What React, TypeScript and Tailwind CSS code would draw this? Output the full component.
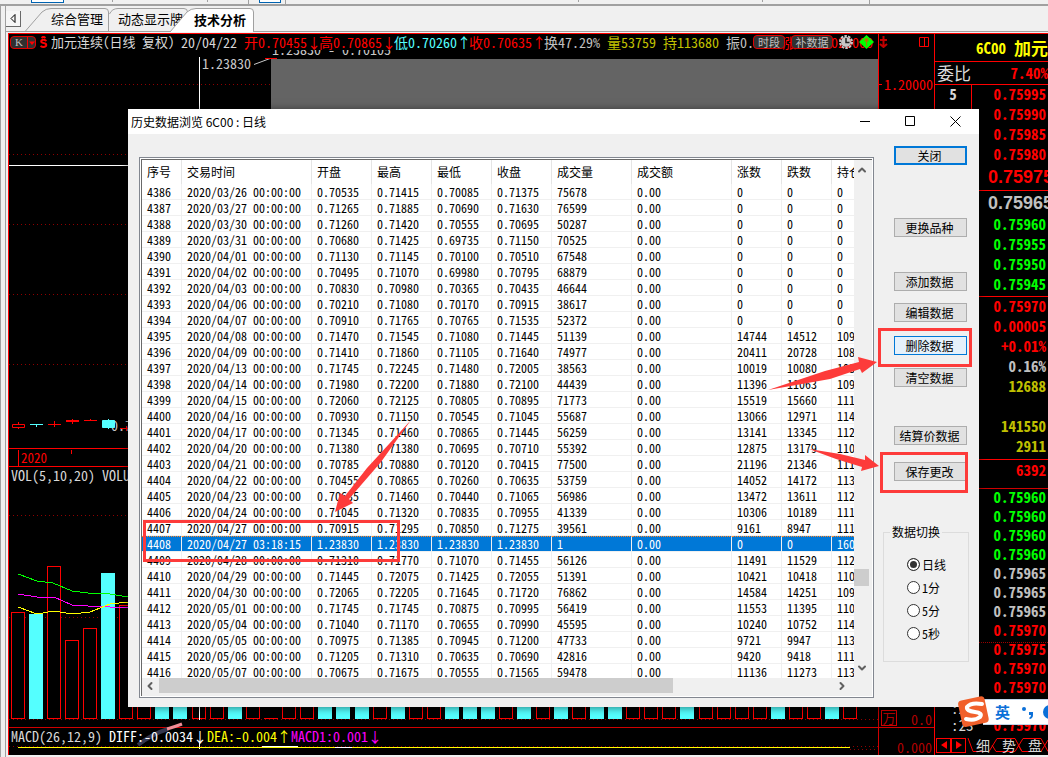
import { useState } from "react";
import { ChevronDown, ChevronLeft, ChevronRight, ChevronUp } from "lucide-react";

type Quote = { price: string; tone: string };

const columns = ["序号", "交易时间", "开盘", "最高", "最低", "收盘", "成交量", "成交额", "涨数", "跌数", "持仓"];

const SELECTED_ID = "4408";

// id, time, open, high, low, close, volume, amount, ups, downs, holding
const rows: string[][] = [
  "4386|2020/03/26 00:00:00|0.70535|0.71415|0.70085|0.71375|75678|0.00|0|0|0",
  "4387|2020/03/27 00:00:00|0.71265|0.71885|0.70690|0.71630|76599|0.00|0|0|0",
  "4388|2020/03/30 00:00:00|0.71260|0.71420|0.70555|0.70695|50287|0.00|0|0|0",
  "4389|2020/03/31 00:00:00|0.70680|0.71425|0.69735|0.71150|70525|0.00|0|0|0",
  "4390|2020/04/01 00:00:00|0.71130|0.71145|0.70100|0.70510|67548|0.00|0|0|0",
  "4391|2020/04/02 00:00:00|0.70495|0.71070|0.69980|0.70795|68879|0.00|0|0|0",
  "4392|2020/04/03 00:00:00|0.70830|0.70980|0.70365|0.70435|46644|0.00|0|0|0",
  "4393|2020/04/06 00:00:00|0.70210|0.71080|0.70170|0.70915|38617|0.00|0|0|0",
  "4394|2020/04/07 00:00:00|0.70910|0.71765|0.70765|0.71535|52372|0.00|0|0|0",
  "4395|2020/04/08 00:00:00|0.71470|0.71545|0.71080|0.71445|51139|0.00|14744|14512|109",
  "4396|2020/04/09 00:00:00|0.71410|0.71860|0.71105|0.71640|74977|0.00|20411|20728|108",
  "4397|2020/04/13 00:00:00|0.71745|0.72245|0.71480|0.72005|38563|0.00|10019|10080|108",
  "4398|2020/04/14 00:00:00|0.71980|0.72200|0.71880|0.72100|44439|0.00|11396|11063|109",
  "4399|2020/04/15 00:00:00|0.72060|0.72125|0.70805|0.70895|71773|0.00|15519|15660|111",
  "4400|2020/04/16 00:00:00|0.70930|0.71150|0.70545|0.71045|55687|0.00|13066|12971|114",
  "4401|2020/04/17 00:00:00|0.71345|0.71460|0.70865|0.71445|56259|0.00|13141|13345|112",
  "4402|2020/04/20 00:00:00|0.71380|0.71380|0.70695|0.70710|55392|0.00|12875|13179|110",
  "4403|2020/04/21 00:00:00|0.70785|0.70880|0.70120|0.70415|77500|0.00|21196|21346|111",
  "4404|2020/04/22 00:00:00|0.70455|0.70865|0.70260|0.70635|53759|0.00|14052|14172|113",
  "4405|2020/04/23 00:00:00|0.70635|0.71460|0.70440|0.71065|56986|0.00|13472|13611|112",
  "4406|2020/04/24 00:00:00|0.71045|0.71320|0.70835|0.70955|41339|0.00|10306|10189|111",
  "4407|2020/04/27 00:00:00|0.70915|0.71295|0.70850|0.71275|39561|0.00|9161|8947|111",
  "4408|2020/04/27 03:18:15|1.23830|1.23830|1.23830|1.23830|1|0.00|0|0|160",
  "4409|2020/04/28 00:00:00|0.71310|0.71770|0.71070|0.71455|56126|0.00|11491|11529|112",
  "4410|2020/04/29 00:00:00|0.71445|0.72075|0.71425|0.72055|51391|0.00|10421|10418|110",
  "4411|2020/04/30 00:00:00|0.72065|0.72205|0.71645|0.71720|76862|0.00|14584|14251|109",
  "4412|2020/05/01 00:00:00|0.71745|0.71745|0.70875|0.70995|56419|0.00|11553|11395|110",
  "4413|2020/05/04 00:00:00|0.71040|0.71170|0.70655|0.70990|45595|0.00|10240|10752|114",
  "4414|2020/05/05 00:00:00|0.70975|0.71385|0.70945|0.71200|47733|0.00|9721|9947|113",
  "4415|2020/05/06 00:00:00|0.71205|0.71310|0.70635|0.70690|42816|0.00|9420|9418|111",
  "4416|2020/05/07 00:00:00|0.70675|0.71675|0.70555|0.71565|59478|0.00|11136|11273|113",
].map((line) => line.split("|"));

const RED = "text-[#ff0000]";
const GREEN = "text-[#00ff00]";
const SILVER = "text-[#c0c0c0]";
const OLIVE = "text-[#c0c000]";

const asks: Quote[] = ["0.75995", "0.75990", "0.75985", "0.75980"].map((price) => ({ price, tone: RED }));
const bids: Quote[] = ["0.75960", "0.75955", "0.75950", "0.75945"].map((price) => ({ price, tone: GREEN }));

const stats: Quote[] = [
  { price: "0.75970", tone: RED },
  { price: "0.00005", tone: RED },
  { price: "+0.01%", tone: RED },
  { price: "0.16%", tone: SILVER },
  { price: "12688", tone: OLIVE },
  { price: "", tone: OLIVE },
  { price: "141550", tone: OLIVE },
  { price: "2911", tone: OLIVE },
];

const ticks: Quote[] = [
  { price: "0.75960", tone: GREEN },
  { price: "0.75960", tone: GREEN },
  { price: "0.75960", tone: GREEN },
  { price: "0.75960", tone: GREEN },
  { price: "0.75965", tone: SILVER },
  { price: "0.75965", tone: SILVER },
  { price: "0.75965", tone: SILVER },
  { price: "0.75970", tone: RED },
  { price: "0.75975", tone: RED },
  { price: "0.75970", tone: RED },
  { price: "0.75970", tone: RED },
];

const headline = [
  { text: "开0.70455↓", tone: RED, width: "w-[75px]" },
  { text: "高0.70865↓", tone: RED, width: "w-[75px]" },
  { text: "低0.70260↑", tone: "text-[#54ffff]", width: "w-[75px]" },
  { text: "收0.70635↑", tone: RED, width: "w-[75px]" },
  { text: "换47.29%", tone: SILVER, width: "w-[63px]" },
  { text: "量53759", tone: OLIVE, width: "w-[56px]" },
  { text: "持113680", tone: OLIVE, width: "w-[63px]" },
  { text: "振0.86%", tone: SILVER, width: "w-[56px]" },
  { text: "涨+0.00020000", tone: RED, width: "w-24" },
];

const volumeBars = [
  { x: 11, top: 612, up: true },
  { x: 29, top: 614, up: false },
  { x: 47, top: 566, up: true },
  { x: 65, top: 640, up: true },
  { x: 83, top: 628, up: true },
  { x: 101, top: 573, up: false },
  { x: 119, top: 605, up: true },
];

// left edges of the bars to the right of the first week, r = rising, f = falling
const laterBars =
  "137r 155f 173f 192r 210r 228f 246r 282r 300r 318f 336f 355f 373r 391f 409r 427r 445f 463f 481f 499r 517f 536r 554f 572r 590f 608f 626r 644r 662r 680f 699r 717r 735r 753r 771f 789r 807r 825f 843r"
    .split(" ")
    .map((bar) => ({ x: parseInt(bar, 10), top: 630, up: bar.endsWith("r") }));

const periods = ["日线", "1分", "5分", "5秒"];

const actions = [
  { label: "关闭", style: "mt-3 border-2 border-[#0078d7] bg-[#e1e1e1]" },
  { label: "更换品种", style: "mt-[53px] border border-[#adadad] bg-[#e1e1e1]" },
  { label: "添加数据", style: "mt-[35px] border border-[#adadad] bg-[#e1e1e1]" },
  { label: "编辑数据", style: "mt-3 border border-[#adadad] bg-[#e1e1e1]" },
  { label: "删除数据", style: "mt-[14px] border border-[#0078d7] bg-[#e5f1fb]" },
  { label: "清空数据", style: "mt-[13px] border border-[#adadad] bg-[#e1e1e1]" },
  { label: "结算价数据", style: "mt-[39px] border border-[#adadad] bg-[#e1e1e1]" },
  { label: "保存更改", style: "mt-[17px] border border-[#adadad] bg-[#e1e1e1]" },
];

function ToolStrip() {
  return (
    <div className="flex h-1.5 items-start border-b-2 border-[#a0a0a0] bg-[#f0f0f0]">
      <span className="ml-[31px] h-[3px] w-[33px] border-x border-b border-[#0063b1] bg-white" />
      <span className="ml-12 h-0.5 w-px bg-[#a0a0a0]" />
      <span className="ml-[94px] h-0.5 w-px bg-[#a0a0a0]" />
      <span className="ml-10 h-1 w-px bg-[#a0a0a0]" />
      <span className="ml-2.5 h-[3px] w-[22px] border-x border-b border-[#0063b1] bg-white" />
      <span className="ml-1 h-1 w-px bg-[#a0a0a0]" />
      <span className="ml-[292px] h-0.5 w-px bg-[#a0a0a0]" />
      <span className="ml-[183px] h-0.5 w-px bg-[#a0a0a0]" />
      <span className="ml-[106px] h-1 w-px bg-[#a0a0a0]" />
    </div>
  );
}

function TabBar() {
  return (
    <nav className="flex h-[26px] items-end border-b border-[#a0a0a0] bg-[#f0f0f0] text-[13px] leading-5">
      <button
        type="button"
        aria-label="向左滚动"
        className="mb-1 flex h-4 w-[15px] items-center justify-center border-r border-b border-[#696969] bg-[#f6f6f6]"
      >
        <svg width="6" height="9" viewBox="0 0 6 9">
          <path d="M5 0.5v8L1 4.5z" fill="none" stroke="#000" />
        </svg>
      </button>
      <button type="button" className="relative ml-1 h-6 w-[84px] pl-[26px] text-left">
        <svg className="absolute inset-0" width="84" height="24" viewBox="0 0 84 24">
          <path d="M0.5 24L17 5Q21 1.5 26 1.5H80Q83.5 1.5 83.5 5V24" fill="#f0f0f0" stroke="#a0a0a0" />
        </svg>
        <span className="relative">综合管理</span>
      </button>
      <button type="button" className="relative h-6 w-[79px] pl-[9px] text-left">
        <svg className="absolute inset-0" width="79" height="24" viewBox="0 0 79 24">
          <path d="M0.5 7Q3 1.5 9 1.5H75Q78.5 1.5 78.5 5V12" fill="none" stroke="#a0a0a0" />
        </svg>
        <span className="relative whitespace-nowrap">动态显示牌</span>
      </button>
      <button type="button" className="relative -mb-px -ml-[18px] h-[25px] w-[84px] pl-6 text-left font-bold">
        <svg className="absolute inset-0" width="84" height="25" viewBox="0 0 84 25">
          <path d="M0 25L17 5Q21 1.5 26 1.5H80Q83.5 1.5 83.5 5V25" fill="#fff" stroke="#a0a0a0" />
        </svg>
        <span className="relative whitespace-nowrap">技术分析</span>
      </button>
    </nav>
  );
}

function ChartHeader() {
  return (
    <div className="relative flex h-4 items-center overflow-hidden whitespace-nowrap text-sm leading-4 [font-feature-settings:'hwid']">
      <button
        type="button"
        aria-label="K线周期"
        className="ml-px flex h-[13px] w-[26px] shrink-0 items-center rounded-sm border border-[#e00000] bg-[#303030] text-[#c0c0c0]"
      >
        <span className="w-4 text-center font-['Liberation_Serif',serif] text-[11px] leading-none">K</span>
        <svg className="shrink-0" width="8" height="11" viewBox="0 0 8 11">
          <path d="M0.5 0v11" stroke="#ff0000" />
          <path d="M2 4.500h6L5 8z" fill="#ff0000" />
        </svg>
      </button>
      <svg className="ml-[3px] shrink-0" width="9" height="13" viewBox="0 0 9 13">
        <path
          d="M2.500 2L4.500 0.500 6.500 2M7.500 5Q4.500 3 2.500 4.500 1.500 6.500 4.500 7 8 7.500 7 10 4.500 12 1.500 10"
          fill="none"
          stroke="#ff0000"
          strokeWidth="2"
        />
      </svg>
      <span className="ml-[3px] w-[130px] shrink-0 text-[13px] text-[#d8d8d8]">加元连续(日线 复权)</span>
      <span className="w-[63px] shrink-0 text-[#d8d8d8]">20/04/22</span>
      {headline.map((item) => (
        <span key={item.text} className={`shrink-0 ${item.width} ${item.tone}`}>
          {item.text}
        </span>
      ))}
      <div className="absolute inset-y-0 right-1 flex items-center gap-1.5">
        <button type="button" className="h-[14px] w-8 rounded-sm border border-[#e00000] bg-[#303030] text-[11px] leading-3 text-[#c0c0c0]">
          时段
        </button>
        <button type="button" className="h-[14px] w-[42px] rounded-sm border border-[#e00000] bg-[#303030] text-[11px] leading-3 text-[#c0c0c0]">
          补数据
        </button>
        <svg width="14" height="14" viewBox="0 0 14 14">
          <circle cx="7" cy="7" r="6" fill="none" stroke="#c8c8c8" strokeWidth="2" strokeDasharray="2.500 1.200" />
          <circle cx="7" cy="7" r="5" fill="#c8c8c8" />
          <path d="M7 3v4.500h3.500" fill="none" stroke="#202020" strokeWidth="1.500" />
        </svg>
        <svg width="15" height="14" viewBox="0 0 15 14">
          <path d="M7.500 0L15 7l-7.500 7L0 7z" fill="#00ff00" />
          <circle cx="7.500" cy="5" r="2" fill="#a08000" />
          <path d="M7.500 5v6" stroke="#a08000" />
        </svg>
      </div>
    </div>
  );
}

function PriceChart() {
  return (
    <svg className="block" width="870" height="398" viewBox="9 50 870 398">
      <g stroke="#900000" strokeDasharray="1 3">
        <path d="M9 84.500H271M9 154.500H879M9 224.500H879M9 294.500H879M9 364.500H879" />
      </g>
      <rect x="271" y="59" width="608" height="330" fill="#646464" />
      <g fill="#c8c8c8" className="text-sm [font-feature-settings:'hwid']">
        <text x="272" y="55">1.23830 - 0.70105</text>
        <text x="202" y="69">1.23830</text>
        <text x="111" y="431">0.70105</text>
      </g>
      <path d="M254 64.500L270 58.500" stroke="#c8c8c8" />
      <path d="M265 58.500h12" stroke="#ff0000" />
      <path d="M199.500 57V448M9 165.500H879" stroke="#fff" />
      <g stroke="#ff0000" fill="none">
        <path d="M12.500 424.500h12v3h-12zM18.500 422v2M18.500 428v1" />
        <path d="M48 424.500h13M54.500 421v6M84 420.500h13M90.500 419v2M120 428.500h8M126.500 426v5" />
        <path d="M66 421h13" strokeWidth="2" />
        <path d="M72.500 419v5" />
      </g>
      <g stroke="#54ffff" fill="#54ffff">
        <path d="M30 424.500h13M36.500 424v3M108.500 419v10" />
        <path d="M102.500 420.500h12v7h-12z" />
      </g>
    </svg>
  );
}

function VolumeChart() {
  return (
    <svg className="block" width="870" height="243" viewBox="9 484 870 243">
      <path d="M9 515.500H879M9 617.500H879M9 719.500H879" stroke="#900000" strokeDasharray="1 3" />
      {[...volumeBars, ...laterBars].map((bar) =>
        bar.up ? (
          <rect key={bar.x} x={bar.x + 0.5} y={bar.top + 0.5} width="13" height={718 - bar.top} fill="#000" stroke="#ff0000" />
        ) : (
          <rect key={bar.x} x={bar.x} y={bar.top} width="14" height={719 - bar.top} fill="#54ffff" />
        )
      )}
      <path d="M264 718.500h14" stroke="#ff0000" />
      <g fill="none" shapeRendering="crispEdges">
        <path d="M18 574L37 581 53 583 72 591 88 593 110 594 128 597" stroke="#00ff00" />
        <path d="M18 594L37 597 54 597 72 605 88 606 110 607 128 608" stroke="#ff00ff" />
        <path d="M18 607L37 614 54 611 72 614 90 612 110 604 128 602" stroke="#ffff00" />
      </g>
    </svg>
  );
}

function ChartArea() {
  return (
    <section className="relative flex min-w-0 flex-1 flex-col overflow-hidden">
      <div className="flex border-b border-[#ff0000]">
        <div className="min-w-0 flex-1 overflow-hidden">
          <ChartHeader />
          <PriceChart />
        </div>
        <div className="w-14 border-l border-[#ff0000] text-sm leading-4 text-[#ff0000]">
          <div className="flex h-4 items-center justify-between pr-1">
            <svg width="9" height="12" viewBox="0 0 9 12">
              <path d="M4.500 0v11M1 4h7M1 8l3.500 3L8 8" fill="none" stroke="#c00000" strokeWidth="2" />
            </svg>
            <svg width="11" height="10" viewBox="0 0 11 10">
              <path d="M0.500 0.500h9v9h-9zM5.500 0.500v9" fill="none" stroke="#ff0000" />
            </svg>
          </div>
          <div className="mt-[26px] flex items-center [font-feature-settings:'hwid']">
            <span className="mr-0.5 h-px w-[3px] bg-[#ff0000]" />
            1.20000
          </div>
        </div>
      </div>
      <div className="flex h-[18px] items-center border-b border-[#ff0000] pl-[9px] text-[13px] leading-4 text-[#ff0000]">
        <span className="border-l border-[#ff0000] pl-0.5 [font-feature-settings:'hwid']">2020</span>
        <span className="mb-3 ml-6 h-1 w-px bg-[#ff0000]" />
      </div>
      <div className="flex border-b border-[#d00000]">
        <div className="min-w-0 flex-1 overflow-hidden">
          <p className="h-[17px] whitespace-pre pl-0.5 text-sm leading-4 text-[#d8d8d8] [font-feature-settings:'hwid']">
            VOL(5,10,20) VOLUME:53759
          </p>
          <VolumeChart />
        </div>
        <div className="flex w-14 items-end justify-between border-l border-[#c00000] px-0.5 text-sm leading-4 text-[#b00000]">
          <span className="mb-px flex size-4 items-center justify-center border border-[#d00000] text-[13px]">万</span>
          <span className="[font-feature-settings:'hwid']">0.0</span>
        </div>
      </div>
      <svg className="pointer-events-none absolute bottom-0 left-0" width="240" height="55" viewBox="9 700 240 55">
        <path d="M199.500 700v20M199.500 741v8" stroke="#fff" />
        <path d="M138 745Q152 734 168 729" fill="none" stroke="#34374f" strokeWidth="4" />
        <path d="M167 729Q174 727 182 724" fill="none" stroke="#f08c96" strokeWidth="3" />
      </svg>
      <div className="relative flex flex-1">
        <div className="min-w-0 flex-1 overflow-hidden">
          <p className="flex h-[18px] pl-0.5 text-sm leading-4 [font-feature-settings:'hwid']">
            <span className="w-[98px] text-[#d8d8d8]">MACD(26,12,9)</span>
            <span className="w-[98px] text-white">DIFF:-0.0034↓</span>
            <span className="w-[84px] text-[#ffff00]">DEA:-0.004↑</span>
            <span className="text-[#ff00ff]">MACD1:0.001↓</span>
          </p>
          <svg className="block" width="870" height="8" viewBox="9 745 870 8">
            <path d="M9 745.500H879M850 748.500H879" stroke="#900000" strokeDasharray="1 3" />
            <path d="M18 746.500H850" stroke="#ffff00" />
            <path d="M262 745.500h36M335 746.500h17" stroke="#fff" />
          </svg>
        </div>
        <div className="flex w-14 items-end justify-end border-l border-[#d00000] pr-0.5 text-sm leading-4 text-[#b00000]">
          <span className="[font-feature-settings:'hwid']">0.000</span>
        </div>
      </div>
    </section>
  );
}

function PriceList({ items, rowClass }: { items: Quote[]; rowClass: string }) {
  return (
    <>
      {items.map((item, index) => (
        <div key={index} className={`${rowClass} ${item.tone}`}>
          {item.price}
        </div>
      ))}
    </>
  );
}

function QuotePanel() {
  const row = "h-5 leading-[18px]";

  return (
    <aside className="flex w-[114px] shrink-0 flex-col overflow-hidden border-l border-[#ff0000] text-right text-[15px] font-bold [font-feature-settings:'hwid']">
      <h2 className="flex h-7 items-center gap-2 whitespace-nowrap border-b border-[#ff0000] pl-[41px] leading-[27px] text-[#ffff00]">
        6C00 <span className="text-[17px]">加元</span>
      </h2>
      <div className="flex h-[23px] items-center justify-between border-b border-[#ff0000] pl-0.5 text-[#ff0000]">
        <span className="text-[17px] font-normal text-[#d8d8d8]">委比</span>
        <span className="leading-[18px]">7.40%</span>
      </div>
      <div className="flex h-[106px] border-b border-[#ff0000]">
        <div className="w-[37px] shrink-0 border-r border-[#ff0000] text-center leading-[18px] text-[#d8d8d8]">5</div>
        <div className="min-w-0 flex-1">
          <PriceList items={asks} rowClass="h-5 pr-0.5 leading-[18px]" />
          <p className="pl-4 text-left font-['Liberation_Sans',sans-serif] text-lg leading-6 text-[#ff0000]">0.75975</p>
        </div>
      </div>
      <div className="border-b border-[#ff0000] pr-0.5 pb-px">
        <p className="pl-[53px] text-left font-['Liberation_Sans',sans-serif] text-lg leading-6 text-[#c0c0c0]">0.75965</p>
        <PriceList items={bids} rowClass={row} />
      </div>
      <div className="border-b border-[#ff0000] pr-0.5 pb-0.5">
        <PriceList items={stats} rowClass={row} />
      </div>
      <div className="h-[29px] border-b border-[#d00000] pr-0.5 leading-5 text-[#ff0000]">6392</div>
      <div className="relative pr-0.5">
        <PriceList items={ticks} rowClass="h-[19px] leading-4" />
        <div className="absolute inset-x-0 top-[153px] border-t border-dotted border-[#a00000]" />
      </div>
      <div className="flex h-[19px] items-center pl-4 font-normal leading-[19px] text-[#d8d8d8]">:24</div>
      <div className="flex h-4 items-center justify-between pr-0.5 pl-4 leading-4">
        <span className="font-normal text-[#d8d8d8]">:23</span>
        <span className="text-[#ff0000]">0.75970</span>
      </div>
      <div className="relative mt-auto mb-0.5 flex h-4 items-center text-sm font-normal leading-4 text-[#d8d8d8]">
        <button type="button" aria-label="上一页" className="ml-px flex h-[15px] w-[15px] shrink-0 items-center justify-center border border-[#ff0000]">
          <svg width="6" height="8" viewBox="0 0 6 8">
            <path d="M6 0v8L0 4z" fill="#ff0000" />
          </svg>
        </button>
        <button type="button" aria-label="下一页" className="flex h-[15px] w-[15px] shrink-0 items-center justify-center border border-[#ff0000]">
          <svg width="6" height="8" viewBox="0 0 6 8">
            <path d="M0 0v8l6-4z" fill="#ff0000" />
          </svg>
        </button>
        <svg className="absolute top-0 left-8" width="82" height="16" viewBox="0 0 82 16">
          <path
            d="M1 1L6 14.500H22L30 1.500H48L55 14.500M25 8L29 14.500H48L56 1.500H74L81 14.500M51 8L55 14.500H74L81 3"
            fill="none"
            stroke="#ff0000"
          />
        </svg>
        <button type="button" className="relative w-[26px] shrink-0 pl-2">细</button>
        <button type="button" className="relative w-[26px] shrink-0 pl-2">势</button>
        <button type="button" className="relative w-[26px] shrink-0 pl-2">盘</button>
      </div>
    </aside>
  );
}

function HistoryTable() {
  return (
    <div className="mt-[23px] ml-[11px] h-[541px] w-[735px] border border-[#828790] bg-white p-px">
      <div className="flex h-full flex-col border-t border-l border-[#696969] bg-[#f0f0f0]">
        <div className="flex h-[518px]">
          <div className="min-w-0 flex-1 overflow-hidden bg-white">
            <table className="w-[770px] table-fixed border-separate border-spacing-0 text-left text-xs [font-feature-settings:'hwid']">
              <colgroup>
                <col className="w-10" />
                <col className="w-[130px]" />
                <col className="w-[60px]" />
                <col className="w-[60px]" />
                <col className="w-[60px]" />
                <col className="w-[60px]" />
                <col className="w-20" />
                <col className="w-[100px]" />
                <col className="w-[50px]" />
                <col className="w-[50px]" />
                <col className="w-20" />
              </colgroup>
              <thead>
                <tr>
                  {columns.map((column) => (
                    <th key={column} className="h-6 border-r border-[#e5e5e5] p-0 pl-[5px] font-normal leading-6">
                      {column}
                    </th>
                  ))}
                </tr>
              </thead>
              <tbody>
                {rows.map((cells) => {
                  const selected = cells[0] === SELECTED_ID;

                  return (
                    <tr key={cells[0]} className={selected ? "bg-[#0078d7] text-white" : "text-black"}>
                      {cells.map((cell, index) => (
                        <td
                          key={index}
                          className={`h-4 whitespace-nowrap border-r border-b border-[#f0f0f0] p-0 pl-[5px] ${
                            selected ? "border-t border-t-[#ff8728] [border-top-style:dotted] leading-[14px]" : "leading-[15px]"
                          }`}
                        >
                          {cell}
                        </td>
                      ))}
                    </tr>
                  );
                })}
              </tbody>
            </table>
          </div>
          <div className="flex w-[15px] flex-col items-center justify-between py-1 text-[#606060]">
            <button type="button" aria-label="向上滚动">
              <ChevronUp className="size-3" strokeWidth={4} />
            </button>
            <span className="mt-auto mb-[76px] h-[17px] w-[15px] bg-[#cdcdcd]" />
            <button type="button" aria-label="向下滚动">
              <ChevronDown className="size-3" strokeWidth={4} />
            </button>
          </div>
          <div className="w-[3px]" />
        </div>
        <div className="flex h-[15px] items-center pr-6 pl-0.5 text-[#606060]">
          <button type="button" aria-label="向左滚动">
            <ChevronLeft className="size-3" strokeWidth={4} />
          </button>
          <span className="ml-[3px] h-[15px] w-[514px] bg-[#cdcdcd]" />
          <button type="button" aria-label="向右滚动" className="ml-auto">
            <ChevronRight className="size-3" strokeWidth={4} />
          </button>
        </div>
      </div>
    </div>
  );
}

function HistoryDialog() {
  const [period, setPeriod] = useState("日线");

  return (
    <div
      role="dialog"
      aria-label="历史数据浏览"
      className="absolute top-[109px] left-32 h-[598px] w-[851px] bg-[#f0f0f0] text-xs text-black shadow-[0_1px_8px_rgba(0,0,0,0.5)]"
    >
      <div className="flex h-[25px] items-center justify-between bg-white pr-[18px] pl-[3px]">
        <h1>历史数据浏览 6C00 : 日线</h1>
        <div className="flex gap-[34px]">
          <button type="button" aria-label="最小化">
            <svg width="11" height="11" viewBox="0 0 11 11">
              <path d="M0 5.500h10" stroke="#000" />
            </svg>
          </button>
          <button type="button" aria-label="最大化">
            <svg width="11" height="11" viewBox="0 0 11 11">
              <path d="M0.500 0.500h9v9h-9z" fill="none" stroke="#000" />
            </svg>
          </button>
          <button type="button" aria-label="关闭窗口">
            <svg width="11" height="11" viewBox="0 0 11 11">
              <path d="M0.500 0.500l10 10M10.500 0.500l-10 10" stroke="#000" />
            </svg>
          </button>
        </div>
      </div>
      <div className="flex">
        <HistoryTable />
        <div className="ml-[9px] flex w-[86px] flex-col">
          {actions.map((action) => (
            <button
              key={action.label}
              type="button"
              className={`ml-[11px] flex h-[19px] w-[73px] items-center justify-center pr-0.5 leading-none ${action.style}`}
            >
              {action.label}
            </button>
          ))}
          <fieldset className="mt-[45px] h-[136px] border border-[#dcdcdc] pt-[15px] pl-[23px]">
            <legend className="-ml-[17px] px-0.5 leading-3">数据切换</legend>
            {periods.map((item) => (
              <label key={item} className="flex h-[23px] items-center gap-0.5 [font-feature-settings:'hwid']">
                <input
                  type="radio"
                  name="period"
                  checked={period === item}
                  onChange={() => setPeriod(item)}
                  className="size-[13px] appearance-none rounded-full border border-[#333333] bg-white checked:bg-[#333333] checked:shadow-[inset_0_0_0_2px_#fff]"
                />
                {item}
              </label>
            ))}
          </fieldset>
        </div>
      </div>
    </div>
  );
}

// red boxes and arrows that mark the bad row and the two buttons to press
function Annotations() {
  return (
    <svg className="pointer-events-none absolute top-[320px] left-[140px]" width="840" height="260" viewBox="140 320 840 260">
      <g fill="none" stroke="#fd3b3a" strokeWidth="3">
        <rect x="144.500" y="521.500" width="254" height="39" />
        <rect x="879.500" y="329.500" width="91" height="36" />
        <rect x="881.500" y="453.500" width="85" height="38" />
      </g>
      <g fill="#fd3b3a">
        <path d="M335 512L340 493 345 496 367 468 411 420 381 462 349 499 353 503z" />
        <path d="M877 362L858 357 859 362 825 371 768 390 830 379 860 369 862 373z" />
        <path d="M879 466L865 455 865 460 840 454 809 449 836 459 862 467 861 471z" />
      </g>
    </svg>
  );
}

function InputMethodBar() {
  return (
    <div className="absolute right-0 bottom-8 flex h-[26px] w-[65px] items-center border-y border-[#c0d4e8] bg-white pl-3 text-[15px] font-bold text-[#0b70d8]">
      <svg className="absolute -top-[5px] -left-[26px]" width="34" height="34" viewBox="0 0 34 34">
        <rect x="3" y="3" width="27" height="27" rx="4" fill="#f1602b" transform="rotate(-12 17 17)" />
        <path d="M25 9Q14 7 10 12 9 16 18 17 26 18 23 22 18 26 9 24" fill="none" stroke="#fff" strokeWidth="4" strokeLinecap="round" />
      </svg>
      <span className="w-[15px]">英</span>
      <svg className="ml-[11px] shrink-0" width="28" height="16" viewBox="0 0 28 16">
        <circle cx="3" cy="5" r="2" fill="#0b70d8" />
        <path d="M8 8h4v3q0 3-3 4l-1-1q2-1 2-3H8z" fill="#0b70d8" />
        <circle cx="29" cy="8" r="7" fill="#0b70d8" />
      </svg>
    </div>
  );
}

export default function App() {
  return (
    <div className="relative flex min-h-screen flex-col overflow-hidden bg-[#f0f0f0] font-['Noto_Sans_CJK_SC',sans-serif] text-black">
      <ToolStrip />
      <div className="flex flex-1">
        <div className="w-1.5 border-x border-[#a0a0a0]" />
        <div className="flex min-w-0 flex-1 flex-col">
          <TabBar />
          <main className="mt-px mb-0.5 ml-0.5 flex flex-1 border-t border-l border-[#ff0000] bg-black">
            <ChartArea />
            <QuotePanel />
          </main>
        </div>
      </div>
      <HistoryDialog />
      <Annotations />
      <InputMethodBar />
    </div>
  );
}
